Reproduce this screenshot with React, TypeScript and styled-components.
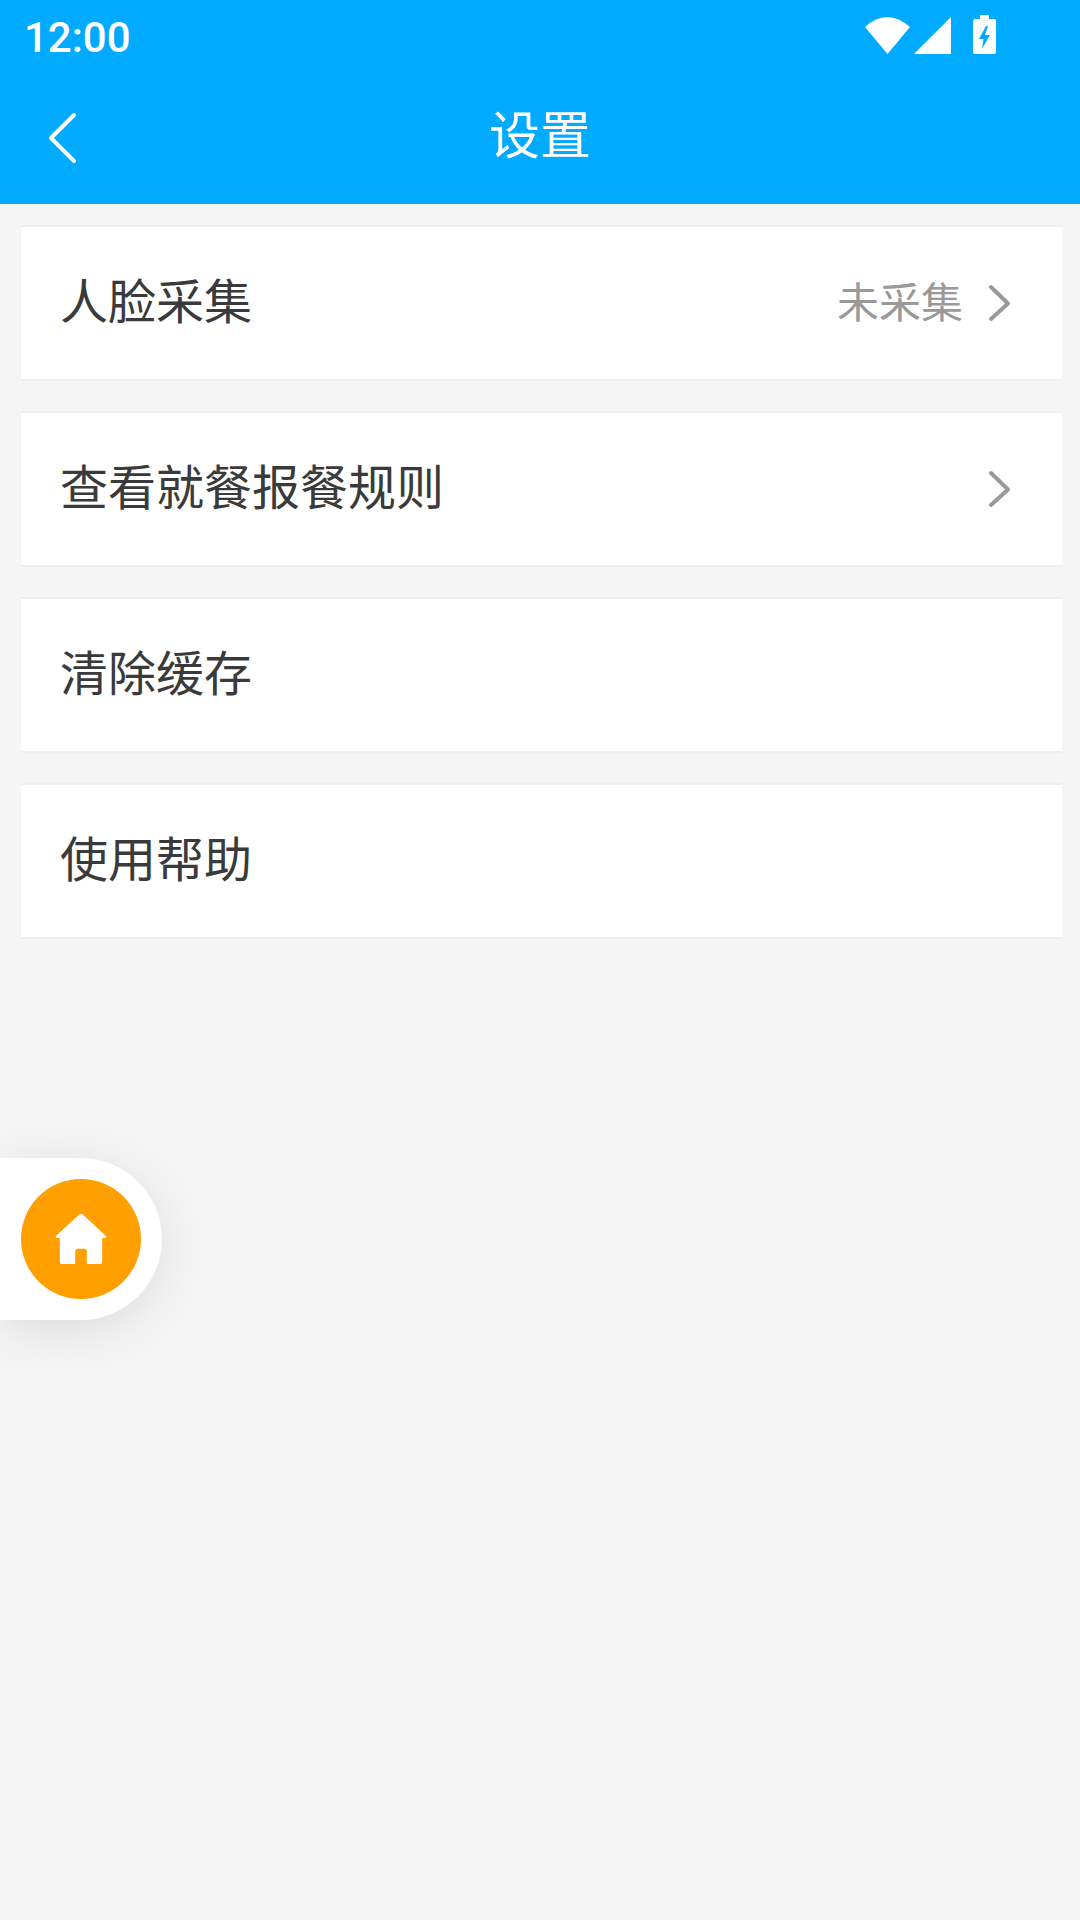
import React from "react";
import styled, { createGlobalStyle } from "styled-components";

const GlobalStyle = createGlobalStyle`
  html, body {
    margin: 0;
    padding: 0;
    background: #f5f5f5;
  }
`;

const Page = styled.div`
  position: relative;
  width: 1080px;
  height: 1920px;
  overflow: hidden;
  background: #f5f5f5;
  font-family: Roboto, "Noto Sans CJK SC", sans-serif;
`;

const Header = styled.header`
  height: 204px;
  background: #00aaff;
  color: #fff;
  display: flex;
  flex-direction: column;
`;

const StatusBar = styled.div`
  height: 72px;
  padding: 0 84px 0 24px;
  display: flex;
  align-items: center;
  justify-content: space-between;
`;

const Time = styled.span`
  font-size: 42px;
  font-weight: 500;
  line-height: 72px;
  padding-top: 3px;
`;

const StatusIcons = styled.div`
  display: flex;
  align-items: center;
  gap: 22px;
  padding-bottom: 4px;
`;

const NavBar = styled.div`
  position: relative;
  flex: 1;
  display: flex;
  align-items: center;
  justify-content: center;
`;

const BackButton = styled.svg`
  position: absolute;
  left: 46px;
  top: 40px;
`;

const Title = styled.h1`
  margin: 0 0 12px;
  font-size: 51px;
  font-weight: 400;
  font-family: "Noto Sans CJK SC", sans-serif;
`;

const List = styled.div`
  display: flex;
  flex-direction: column;
  gap: 30px;
  padding: 21px 18px 0 21px;
`;

const Row = styled.div`
  height: 152px;
  background: #fff;
  border-top: 2px solid #efefef;
  border-bottom: 2px solid #efefef;
  padding: 0 50px 0 39px;
  display: flex;
  align-items: center;
  justify-content: space-between;
`;

const Label = styled.span`
  font-family: "Noto Sans CJK SC", sans-serif;
  font-size: 48px;
  color: #3a3a3a;
  position: relative;
  top: -5px;
`;

const Right = styled.div`
  display: flex;
  align-items: center;
  gap: 25px;
`;

const Status = styled.span`
  font-family: "Noto Sans CJK SC", sans-serif;
  font-size: 42px;
  color: #999;
  position: relative;
  top: -4px;
`;

const FloatTab = styled.div`
  position: absolute;
  left: 0;
  top: 1158px;
  width: 162px;
  height: 162px;
  background: #fff;
  border-radius: 0 81px 81px 0;
  box-shadow: 0 10px 50px rgba(0, 0, 0, 0.1);
  display: flex;
  align-items: center;
  justify-content: center;
`;

const HomeButton = styled.div`
  width: 120px;
  height: 120px;
  border-radius: 50%;
  background: #ff9f00;
  display: flex;
  align-items: center;
  justify-content: center;
`;

const rows = [
  { label: "人脸采集", status: "未采集", arrow: true },
  { label: "查看就餐报餐规则", arrow: true },
  { label: "清除缓存" },
  { label: "使用帮助" },
];

function Chevron() {
  return (
    <svg width="24" height="38" viewBox="0 0 24 38" fill="none">
      <path d="M3 3 L20 19.5 L3 35" stroke="#999" strokeWidth="4" strokeLinecap="round" strokeLinejoin="round" />
    </svg>
  );
}

export default function App() {
  return (
    <Page>
      <GlobalStyle />
      <Header>
        <StatusBar>
          <Time>12:00</Time>
          <StatusIcons>
            <svg width="86" height="40" viewBox="0 -3 86 40" fill="#fff">
              <path d="M0 10 Q22 -10 45 10 L22.5 37 Z" />
              <path d="M49 37 L86 0 L86 37 Z" />
            </svg>
            <svg width="23" height="39" viewBox="0 0 23 39">
              <path
                fill="#fff"
                d="M7 0 H16 V4 H21 Q23 4 23 6 V37 Q23 39 21 39 H2 Q0 39 0 37 V6 Q0 4 2 4 H7 Z"
              />
              <path fill="#00aaff" d="M13 11 L6 24 H10.5 L9 34 L17 20 H12 L15 11 Z" />
            </svg>
          </StatusIcons>
        </StatusBar>
        <NavBar>
          <BackButton width="32" height="54" viewBox="0 0 32 54" fill="none">
            <path d="M28 3 L5 26 L28 49" stroke="#fff" strokeWidth="4" strokeLinecap="round" strokeLinejoin="round" />
          </BackButton>
          <Title>设置</Title>
        </NavBar>
      </Header>
      <List>
        {rows.map((row) => (
          <Row key={row.label}>
            <Label>{row.label}</Label>
            {row.arrow && (
              <Right>
                {row.status && <Status>{row.status}</Status>}
                <Chevron />
              </Right>
            )}
          </Row>
        ))}
      </List>
      <FloatTab>
        <HomeButton>
          <svg width="52" height="52" viewBox="0 0 54 54" fill="#fff">
            <path d="M27 1 Q28.5 1 30 2.5 L53 24 Q54 26 52 26 H49 V50 Q49 53 46 53 H33 V40 Q33 37 30 37 H24 Q21 37 21 40 V53 H8 Q5 53 5 50 V26 H2 Q0 26 1 24 L24 2.5 Q25.5 1 27 1 Z" />
          </svg>
        </HomeButton>
      </FloatTab>
    </Page>
  );
}
